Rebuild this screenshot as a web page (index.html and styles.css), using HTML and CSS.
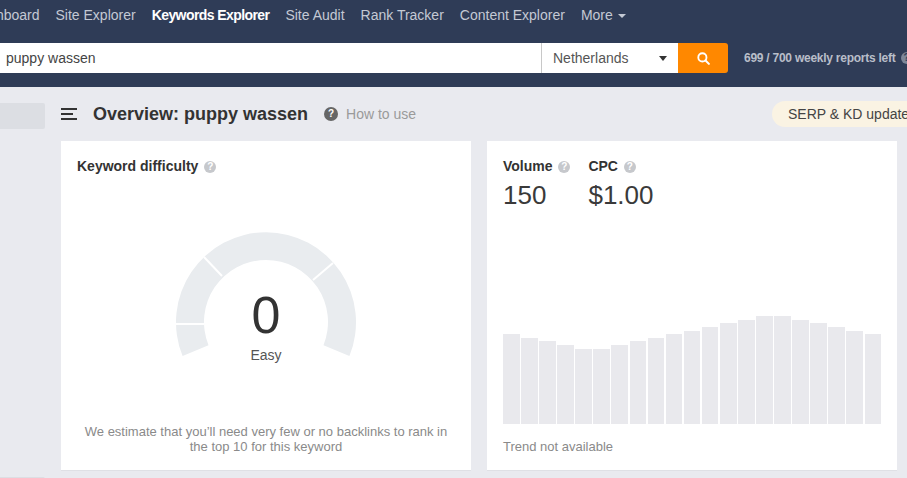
FILE: index.html
```html
<!DOCTYPE html>
<html>
    <head>
        <title>Keywords Explorer</title>
        <link rel="stylesheet" href="styles.css">
    </head>
    <body>
        <div class="header">
            <div class="nav">
                <a class="nav-link">Dashboard</a>
                <a class="nav-link">Site Explorer</a>
                <a class="nav-link active">Keywords Explorer</a>
                <a class="nav-link">Site Audit</a>
                <a class="nav-link">Rank Tracker</a>
                <a class="nav-link">Content Explorer</a>
                <a class="nav-link">More <span class="nav-caret"></span></a>
            </div>
            <div class="search-row">
                <div class="search-input">puppy wassen</div>
                <div class="search-select">Netherlands <span class="select-caret"></span></div>
                <div class="search-btn">
                    <svg width="13" height="13" viewBox="0 0 14 14">
                        <circle cx="5.8" cy="5.8" r="4.4" fill="none" stroke="#fff" stroke-width="2"/>
                        <path d="M9.2 9.2L12.8 12.8" stroke="#fff" stroke-width="2.2" stroke-linecap="round"/>
                    </svg>
                </div>
                <div class="reports">699 / 700 weekly reports left</div>
                <div class="reports-help">?</div>
            </div>
        </div>

        <div class="content">
            <div class="side">
                <div class="side-stub"></div>
                <div class="side-stub next"></div>
            </div>
            <div class="main">
                <div class="title-row">
                    <div class="burger"><span class="b1"></span><span class="b2"></span><span class="b3"></span></div>
                    <h1 class="title">Overview: puppy wassen</h1>
                    <span class="help dark">?</span>
                    <span class="how-to">How to use</span>
                    <div class="pill">SERP &amp; KD update</div>
                </div>
                <div class="cards">
                    <div class="card kd-card">
                        <div class="label">Keyword difficulty <span class="help">?</span></div>
                        <div class="gauge-wrap">
                            <svg class="gauge" width="190" height="130" viewBox="0 0 190 130">
                                <!-- centre 95,95 in this box, radii 90 and 62 -->
                                <path d="M11.6 129.1A90 90 0 1 1 178.4 129.1L152.5 118.2A62 62 0 1 0 37.5 118.2Z" fill="#e9ecef"/>
                                <path d="M5 97H33" stroke="#fff" stroke-width="2"/>
                                <path d="M33 30L51 49" stroke="#fff" stroke-width="2"/>
                                <path d="M162 36L142 53" stroke="#fff" stroke-width="2"/>
                            </svg>
                            <div class="gauge-num">0</div>
                            <div class="gauge-text">Easy</div>
                        </div>
                        <p class="kd-note">We estimate that you’ll need very few or no backlinks to rank in the top 10 for this keyword</p>
                    </div>
                    <div class="card trend-card">
                        <div class="stats">
                            <div class="stat">
                                <div class="label">Volume <span class="help">?</span></div>
                                <div class="stat-num">150</div>
                            </div>
                            <div class="stat">
                                <div class="label">CPC <span class="help">?</span></div>
                                <div class="stat-num">$1.00</div>
                            </div>
                        </div>
                        <div class="bars" id="bars"></div>
                        <div class="trend-note">Trend not available</div>
                    </div>
                </div>
            </div>
        </div>
        <script>
            const heights = [90, 86, 83, 79, 75, 75, 79, 83, 86, 90, 93, 97, 101, 104, 108, 108, 104, 101, 97, 93, 90]
            const barsHandle = document.getElementById("bars")

            heights.forEach(function(h){
                const bar = document.createElement("div")
                bar.className = "bar"
                bar.style.height = h + "px"
                barsHandle.appendChild(bar)
            })
        </script>
    </body>
</html>
```

FILE: styles.css
```css
html, body {
    margin: 0;
    height: 478px;
    overflow: hidden;
}
body {
    background: #e9eaef;
    font-family: "Liberation Sans", Arial, sans-serif;
    color: #333;
}
.header {
    background: #2f3c57;
    height: 87px;
}
.nav {
    display: flex;
    align-items: center;
    gap: 16px;
    height: 43px;
    margin-left: -29px;
    padding-bottom: 13px;
    box-sizing: border-box;
    font-size: 14px;
    white-space: nowrap;
}
.nav-link {
    color: #c4c9d4;
}
.nav-link.active {
    color: #fff;
    font-weight: bold;
    letter-spacing: -0.58px;
}
.nav-caret {
    display: inline-block;
    margin-left: 1px;
    border-left: 4px solid transparent;
    border-right: 4px solid transparent;
    border-top: 4px solid #c4c9d4;
    vertical-align: 2px;
}
.search-row {
    display: flex;
    align-items: center;
    height: 30px;
}
.search-input {
    flex: none;
    width: 535px;
    height: 30px;
    line-height: 30px;
    padding-left: 6px;
    background: #fff;
    font-size: 14px;
    color: #444;
}
.search-select {
    flex: none;
    width: 125px;
    height: 30px;
    line-height: 30px;
    padding-left: 11px;
    border-left: 1px solid #c8c8c8;
    background: #fff;
    font-size: 14px;
    color: #555;
    position: relative;
}
.select-caret {
    position: absolute;
    right: 11px;
    top: 13px;
    border-left: 4px solid transparent;
    border-right: 4px solid transparent;
    border-top: 5px solid #333;
}
.search-btn {
    flex: none;
    display: flex;
    align-items: center;
    justify-content: center;
    width: 50px;
    height: 30px;
    background: #ff8800;
    border-radius: 0 3px 3px 0;
}
.reports {
    flex: none;
    margin-left: 16px;
    font-size: 12px;
    font-weight: bold;
    letter-spacing: -0.25px;
    color: #b9bec9;
    white-space: nowrap;
}
.reports-help {
    flex: none;
    width: 12px;
    height: 12px;
    margin-left: 5px;
    border-radius: 50%;
    background: #7d8799;
    color: #2f3c57;
    font-size: 10px;
    font-weight: bold;
    line-height: 12px;
    text-align: center;
}
.content {
    display: flex;
}
.side {
    flex: none;
    width: 45px;
    padding-top: 16px;
}
.side-stub {
    height: 26px;
    background: #dcdee3;
    border-radius: 0 2px 2px 0;
}
.side-stub.next {
    margin-top: 348px;
}
.main {
    flex: none;
    width: 852px;
    margin-left: 16px;
}
.title-row {
    display: flex;
    align-items: center;
    height: 54px;
}
.burger {
    display: flex;
    flex-direction: column;
    gap: 3px;
    width: 16px;
    margin-right: 16px;
}
.burger span {
    height: 2px;
    background: #333;
}
.burger .b2 {
    width: 12px;
}
.title {
    margin: 0 16px 0 0;
    font-size: 18px;
    font-weight: bold;
    color: #333;
}
.help {
    display: inline-block;
    width: 12px;
    height: 12px;
    border-radius: 50%;
    background: #c6c8cc;
    color: #fff;
    font-size: 10px;
    font-weight: bold;
    line-height: 12px;
    text-align: center;
    vertical-align: 1px;
    margin-left: 2px;
}
.help.dark {
    width: 14px;
    height: 14px;
    margin-left: 0;
    background: #666;
    line-height: 14px;
}
.how-to {
    margin-left: 8px;
    font-size: 14px;
    color: #9a9a9a;
}
.pill {
    flex: none;
    width: 165px;
    height: 26px;
    line-height: 26px;
    padding-left: 16px;
    margin-left: auto;
    margin-right: -40px;
    border-radius: 13px;
    background: #faf3e3;
    font-size: 14px;
    color: #444;
    white-space: nowrap;
}
.cards {
    display: flex;
    gap: 16px;
}
.card {
    position: relative;
    box-sizing: border-box;
    width: 410px;
    height: 330px;
    padding: 16px;
    background: #fff;
    border-bottom: 1px solid #dfe0e5;
}
.label {
    font-size: 14px;
    font-weight: bold;
    line-height: 18px;
    color: #333;
    white-space: nowrap;
}
.gauge-wrap {
    position: relative;
    width: 190px;
    height: 130px;
    margin: 52px auto 0;
}
.gauge {
    display: block;
}
.gauge-num {
    position: absolute;
    left: 0;
    right: 0;
    top: 58px;
    font-size: 52px;
    line-height: 60px;
    text-align: center;
    color: #333;
}
.gauge-text {
    position: absolute;
    left: 0;
    right: 0;
    top: 120px;
    font-size: 14px;
    line-height: 16px;
    text-align: center;
    color: #555;
}
.kd-note {
    margin: 67px 0 0;
    font-size: 13px;
    line-height: 15px;
    text-align: center;
    color: #8a8a8a;
}
.stats {
    display: flex;
    gap: 18px;
}
.stat-num {
    margin-top: 5px;
    font-size: 26px;
    line-height: 30px;
    color: #3a3a3a;
}
.bars {
    display: flex;
    align-items: flex-end;
    gap: 1.5px;
    height: 108px;
    margin-top: 106px;
}
.bar {
    flex: 1;
    background: #e9e9ed;
}
.trend-note {
    margin-top: 15px;
    font-size: 13px;
    line-height: 15px;
    color: #8a8a8a;
}
```
